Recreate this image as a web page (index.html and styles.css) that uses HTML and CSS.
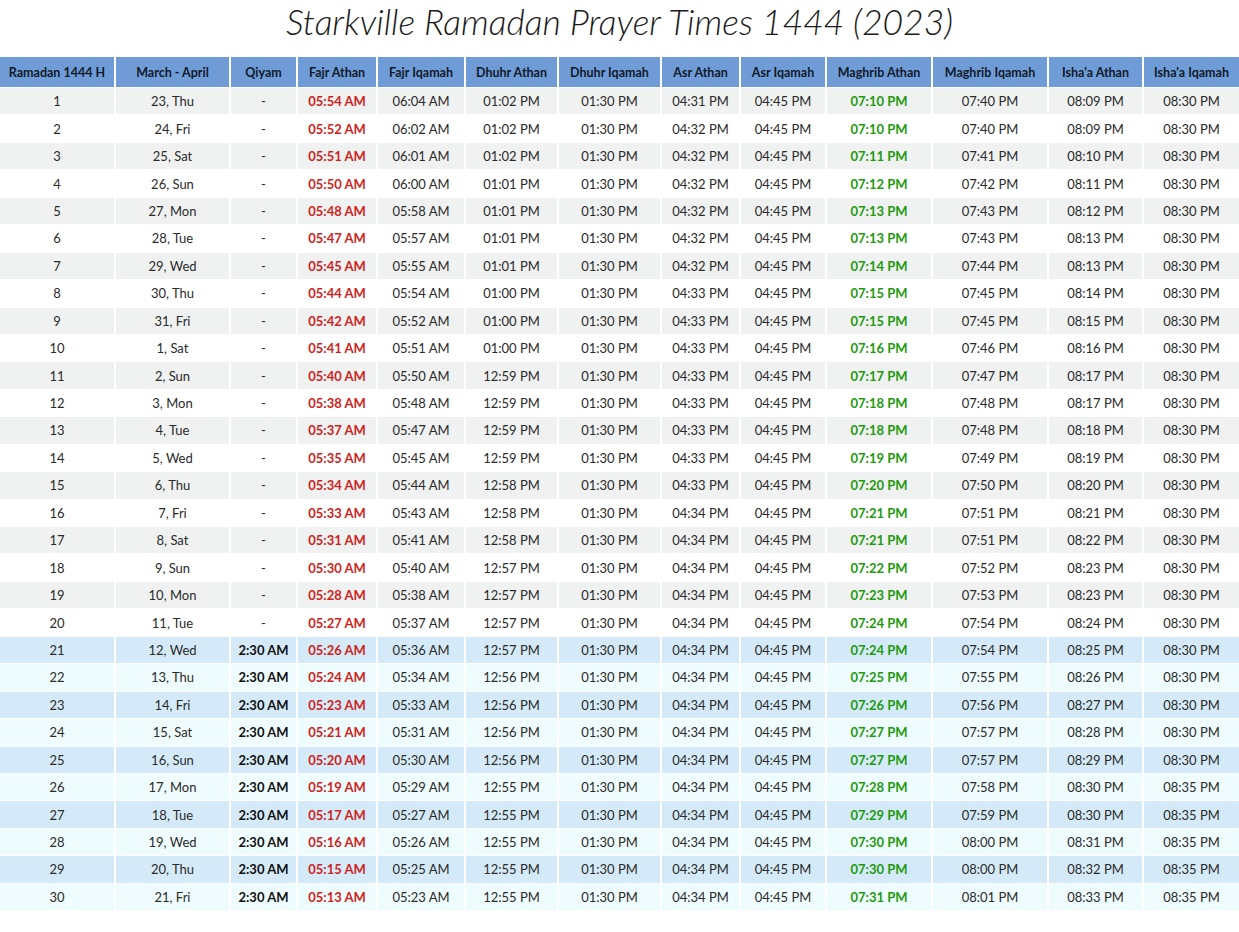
FILE: index.html
```html
<!DOCTYPE html>
<html lang="en">
<head>
<meta charset="utf-8">
<title>Starkville Ramadan Prayer Times 1444 (2023)</title>
<link rel="stylesheet" href="styles.css">
</head>
<body>
<div class="page">
<h1 class="title">Starkville Ramadan Prayer Times 1444 (2023)</h1>
<div class="table-wrap">
<table class="times">
<colgroup>
<col style="width:114px"><col style="width:113px"><col style="width:65px"><col style="width:78px"><col style="width:86px"><col style="width:91px"><col style="width:101px"><col style="width:77px"><col style="width:84px"><col style="width:104px"><col style="width:114px"><col style="width:93px"><col style="width:95px">
</colgroup>
<thead>
<tr><th>Ramadan 1444 H</th><th>March - April</th><th>Qiyam</th><th>Fajr Athan</th><th>Fajr Iqamah</th><th>Dhuhr Athan</th><th>Dhuhr Iqamah</th><th>Asr Athan</th><th>Asr Iqamah</th><th>Maghrib Athan</th><th>Maghrib Iqamah</th><th>Isha'a Athan</th><th>Isha'a Iqamah</th></tr>
</thead>
<tbody>
<tr class="odd"><td>1</td><td>23, Thu</td><td>-</td><td class="fajr">05:54 AM</td><td>06:04 AM</td><td>01:02 PM</td><td>01:30 PM</td><td>04:31 PM</td><td>04:45 PM</td><td class="maghrib">07:10 PM</td><td>07:40 PM</td><td>08:09 PM</td><td>08:30 PM</td></tr>
<tr class="even"><td>2</td><td>24, Fri</td><td>-</td><td class="fajr">05:52 AM</td><td>06:02 AM</td><td>01:02 PM</td><td>01:30 PM</td><td>04:32 PM</td><td>04:45 PM</td><td class="maghrib">07:10 PM</td><td>07:40 PM</td><td>08:09 PM</td><td>08:30 PM</td></tr>
<tr class="odd"><td>3</td><td>25, Sat</td><td>-</td><td class="fajr">05:51 AM</td><td>06:01 AM</td><td>01:02 PM</td><td>01:30 PM</td><td>04:32 PM</td><td>04:45 PM</td><td class="maghrib">07:11 PM</td><td>07:41 PM</td><td>08:10 PM</td><td>08:30 PM</td></tr>
<tr class="even"><td>4</td><td>26, Sun</td><td>-</td><td class="fajr">05:50 AM</td><td>06:00 AM</td><td>01:01 PM</td><td>01:30 PM</td><td>04:32 PM</td><td>04:45 PM</td><td class="maghrib">07:12 PM</td><td>07:42 PM</td><td>08:11 PM</td><td>08:30 PM</td></tr>
<tr class="odd"><td>5</td><td>27, Mon</td><td>-</td><td class="fajr">05:48 AM</td><td>05:58 AM</td><td>01:01 PM</td><td>01:30 PM</td><td>04:32 PM</td><td>04:45 PM</td><td class="maghrib">07:13 PM</td><td>07:43 PM</td><td>08:12 PM</td><td>08:30 PM</td></tr>
<tr class="even"><td>6</td><td>28, Tue</td><td>-</td><td class="fajr">05:47 AM</td><td>05:57 AM</td><td>01:01 PM</td><td>01:30 PM</td><td>04:32 PM</td><td>04:45 PM</td><td class="maghrib">07:13 PM</td><td>07:43 PM</td><td>08:13 PM</td><td>08:30 PM</td></tr>
<tr class="odd"><td>7</td><td>29, Wed</td><td>-</td><td class="fajr">05:45 AM</td><td>05:55 AM</td><td>01:01 PM</td><td>01:30 PM</td><td>04:32 PM</td><td>04:45 PM</td><td class="maghrib">07:14 PM</td><td>07:44 PM</td><td>08:13 PM</td><td>08:30 PM</td></tr>
<tr class="even"><td>8</td><td>30, Thu</td><td>-</td><td class="fajr">05:44 AM</td><td>05:54 AM</td><td>01:00 PM</td><td>01:30 PM</td><td>04:33 PM</td><td>04:45 PM</td><td class="maghrib">07:15 PM</td><td>07:45 PM</td><td>08:14 PM</td><td>08:30 PM</td></tr>
<tr class="odd"><td>9</td><td>31, Fri</td><td>-</td><td class="fajr">05:42 AM</td><td>05:52 AM</td><td>01:00 PM</td><td>01:30 PM</td><td>04:33 PM</td><td>04:45 PM</td><td class="maghrib">07:15 PM</td><td>07:45 PM</td><td>08:15 PM</td><td>08:30 PM</td></tr>
<tr class="even"><td>10</td><td>1, Sat</td><td>-</td><td class="fajr">05:41 AM</td><td>05:51 AM</td><td>01:00 PM</td><td>01:30 PM</td><td>04:33 PM</td><td>04:45 PM</td><td class="maghrib">07:16 PM</td><td>07:46 PM</td><td>08:16 PM</td><td>08:30 PM</td></tr>
<tr class="odd"><td>11</td><td>2, Sun</td><td>-</td><td class="fajr">05:40 AM</td><td>05:50 AM</td><td>12:59 PM</td><td>01:30 PM</td><td>04:33 PM</td><td>04:45 PM</td><td class="maghrib">07:17 PM</td><td>07:47 PM</td><td>08:17 PM</td><td>08:30 PM</td></tr>
<tr class="even"><td>12</td><td>3, Mon</td><td>-</td><td class="fajr">05:38 AM</td><td>05:48 AM</td><td>12:59 PM</td><td>01:30 PM</td><td>04:33 PM</td><td>04:45 PM</td><td class="maghrib">07:18 PM</td><td>07:48 PM</td><td>08:17 PM</td><td>08:30 PM</td></tr>
<tr class="odd"><td>13</td><td>4, Tue</td><td>-</td><td class="fajr">05:37 AM</td><td>05:47 AM</td><td>12:59 PM</td><td>01:30 PM</td><td>04:33 PM</td><td>04:45 PM</td><td class="maghrib">07:18 PM</td><td>07:48 PM</td><td>08:18 PM</td><td>08:30 PM</td></tr>
<tr class="even"><td>14</td><td>5, Wed</td><td>-</td><td class="fajr">05:35 AM</td><td>05:45 AM</td><td>12:59 PM</td><td>01:30 PM</td><td>04:33 PM</td><td>04:45 PM</td><td class="maghrib">07:19 PM</td><td>07:49 PM</td><td>08:19 PM</td><td>08:30 PM</td></tr>
<tr class="odd"><td>15</td><td>6, Thu</td><td>-</td><td class="fajr">05:34 AM</td><td>05:44 AM</td><td>12:58 PM</td><td>01:30 PM</td><td>04:33 PM</td><td>04:45 PM</td><td class="maghrib">07:20 PM</td><td>07:50 PM</td><td>08:20 PM</td><td>08:30 PM</td></tr>
<tr class="even"><td>16</td><td>7, Fri</td><td>-</td><td class="fajr">05:33 AM</td><td>05:43 AM</td><td>12:58 PM</td><td>01:30 PM</td><td>04:34 PM</td><td>04:45 PM</td><td class="maghrib">07:21 PM</td><td>07:51 PM</td><td>08:21 PM</td><td>08:30 PM</td></tr>
<tr class="odd"><td>17</td><td>8, Sat</td><td>-</td><td class="fajr">05:31 AM</td><td>05:41 AM</td><td>12:58 PM</td><td>01:30 PM</td><td>04:34 PM</td><td>04:45 PM</td><td class="maghrib">07:21 PM</td><td>07:51 PM</td><td>08:22 PM</td><td>08:30 PM</td></tr>
<tr class="even"><td>18</td><td>9, Sun</td><td>-</td><td class="fajr">05:30 AM</td><td>05:40 AM</td><td>12:57 PM</td><td>01:30 PM</td><td>04:34 PM</td><td>04:45 PM</td><td class="maghrib">07:22 PM</td><td>07:52 PM</td><td>08:23 PM</td><td>08:30 PM</td></tr>
<tr class="odd"><td>19</td><td>10, Mon</td><td>-</td><td class="fajr">05:28 AM</td><td>05:38 AM</td><td>12:57 PM</td><td>01:30 PM</td><td>04:34 PM</td><td>04:45 PM</td><td class="maghrib">07:23 PM</td><td>07:53 PM</td><td>08:23 PM</td><td>08:30 PM</td></tr>
<tr class="even"><td>20</td><td>11, Tue</td><td>-</td><td class="fajr">05:27 AM</td><td>05:37 AM</td><td>12:57 PM</td><td>01:30 PM</td><td>04:34 PM</td><td>04:45 PM</td><td class="maghrib">07:24 PM</td><td>07:54 PM</td><td>08:24 PM</td><td>08:30 PM</td></tr>
<tr class="q-odd"><td>21</td><td>12, Wed</td><td class="qiyam">2:30 AM</td><td class="fajr">05:26 AM</td><td>05:36 AM</td><td>12:57 PM</td><td>01:30 PM</td><td>04:34 PM</td><td>04:45 PM</td><td class="maghrib">07:24 PM</td><td>07:54 PM</td><td>08:25 PM</td><td>08:30 PM</td></tr>
<tr class="q-even"><td>22</td><td>13, Thu</td><td class="qiyam">2:30 AM</td><td class="fajr">05:24 AM</td><td>05:34 AM</td><td>12:56 PM</td><td>01:30 PM</td><td>04:34 PM</td><td>04:45 PM</td><td class="maghrib">07:25 PM</td><td>07:55 PM</td><td>08:26 PM</td><td>08:30 PM</td></tr>
<tr class="q-odd"><td>23</td><td>14, Fri</td><td class="qiyam">2:30 AM</td><td class="fajr">05:23 AM</td><td>05:33 AM</td><td>12:56 PM</td><td>01:30 PM</td><td>04:34 PM</td><td>04:45 PM</td><td class="maghrib">07:26 PM</td><td>07:56 PM</td><td>08:27 PM</td><td>08:30 PM</td></tr>
<tr class="q-even"><td>24</td><td>15, Sat</td><td class="qiyam">2:30 AM</td><td class="fajr">05:21 AM</td><td>05:31 AM</td><td>12:56 PM</td><td>01:30 PM</td><td>04:34 PM</td><td>04:45 PM</td><td class="maghrib">07:27 PM</td><td>07:57 PM</td><td>08:28 PM</td><td>08:30 PM</td></tr>
<tr class="q-odd"><td>25</td><td>16, Sun</td><td class="qiyam">2:30 AM</td><td class="fajr">05:20 AM</td><td>05:30 AM</td><td>12:56 PM</td><td>01:30 PM</td><td>04:34 PM</td><td>04:45 PM</td><td class="maghrib">07:27 PM</td><td>07:57 PM</td><td>08:29 PM</td><td>08:30 PM</td></tr>
<tr class="q-even"><td>26</td><td>17, Mon</td><td class="qiyam">2:30 AM</td><td class="fajr">05:19 AM</td><td>05:29 AM</td><td>12:55 PM</td><td>01:30 PM</td><td>04:34 PM</td><td>04:45 PM</td><td class="maghrib">07:28 PM</td><td>07:58 PM</td><td>08:30 PM</td><td>08:35 PM</td></tr>
<tr class="q-odd"><td>27</td><td>18, Tue</td><td class="qiyam">2:30 AM</td><td class="fajr">05:17 AM</td><td>05:27 AM</td><td>12:55 PM</td><td>01:30 PM</td><td>04:34 PM</td><td>04:45 PM</td><td class="maghrib">07:29 PM</td><td>07:59 PM</td><td>08:30 PM</td><td>08:35 PM</td></tr>
<tr class="q-even"><td>28</td><td>19, Wed</td><td class="qiyam">2:30 AM</td><td class="fajr">05:16 AM</td><td>05:26 AM</td><td>12:55 PM</td><td>01:30 PM</td><td>04:34 PM</td><td>04:45 PM</td><td class="maghrib">07:30 PM</td><td>08:00 PM</td><td>08:31 PM</td><td>08:35 PM</td></tr>
<tr class="q-odd"><td>29</td><td>20, Thu</td><td class="qiyam">2:30 AM</td><td class="fajr">05:15 AM</td><td>05:25 AM</td><td>12:55 PM</td><td>01:30 PM</td><td>04:34 PM</td><td>04:45 PM</td><td class="maghrib">07:30 PM</td><td>08:00 PM</td><td>08:32 PM</td><td>08:35 PM</td></tr>
<tr class="q-even"><td>30</td><td>21, Fri</td><td class="qiyam">2:30 AM</td><td class="fajr">05:13 AM</td><td>05:23 AM</td><td>12:55 PM</td><td>01:30 PM</td><td>04:34 PM</td><td>04:45 PM</td><td class="maghrib">07:31 PM</td><td>08:01 PM</td><td>08:33 PM</td><td>08:35 PM</td></tr>
</tbody>
</table>
</div>
</div>
</body>
</html>
```

FILE: styles.css
```css
html, body {
  margin: 0;
  padding: 0;
  background: #ffffff;
}

body {
  overflow: hidden;
  font-family: "Lato", "Open Sans", sans-serif;
  color: #222222;
}

.page {
  width: 1239px;
}

.title {
  margin: 0;
  height: 56px;
  line-height: 44px;
  text-align: center;
  font-family: "Lato", "Open Sans", sans-serif;
  font-style: italic;
  font-weight: 300;
  font-size: 35.5px;
  color: #1a1a1a;
}

.table-wrap {
  overflow: hidden;
  width: 1239px;
}

.times {
  table-layout: fixed;
  border-collapse: separate;
  border-spacing: 2px 1px;
  width: 1243px;
  margin-left: -2px;
  font-size: 13px;
}

.times th {
  background: #6f9bd7;
  color: #111a2a;
  font-size: 12.5px;
  font-weight: 700;
  height: 30px;
  padding: 0;
  text-align: center;
  white-space: nowrap;
}

.times td {
  height: 26.45px;
  padding: 0;
  text-align: center;
  white-space: nowrap;
  font-weight: 400;
  color: #2a2a2a;
}

.times tr.odd td { background: #f0f1f1; }
.times tr.even td { background: #ffffff; }
.times tr.q-odd td { background: #d5eaf8; }
.times tr.q-even td { background: #effcfd; }

.times td.fajr {
  color: #cf1f20;
  font-weight: 700;
}

.times td.maghrib {
  color: #1e9a0e;
  font-weight: 700;
}

.times td.qiyam {
  color: #111111;
  font-weight: 700;
}
```
